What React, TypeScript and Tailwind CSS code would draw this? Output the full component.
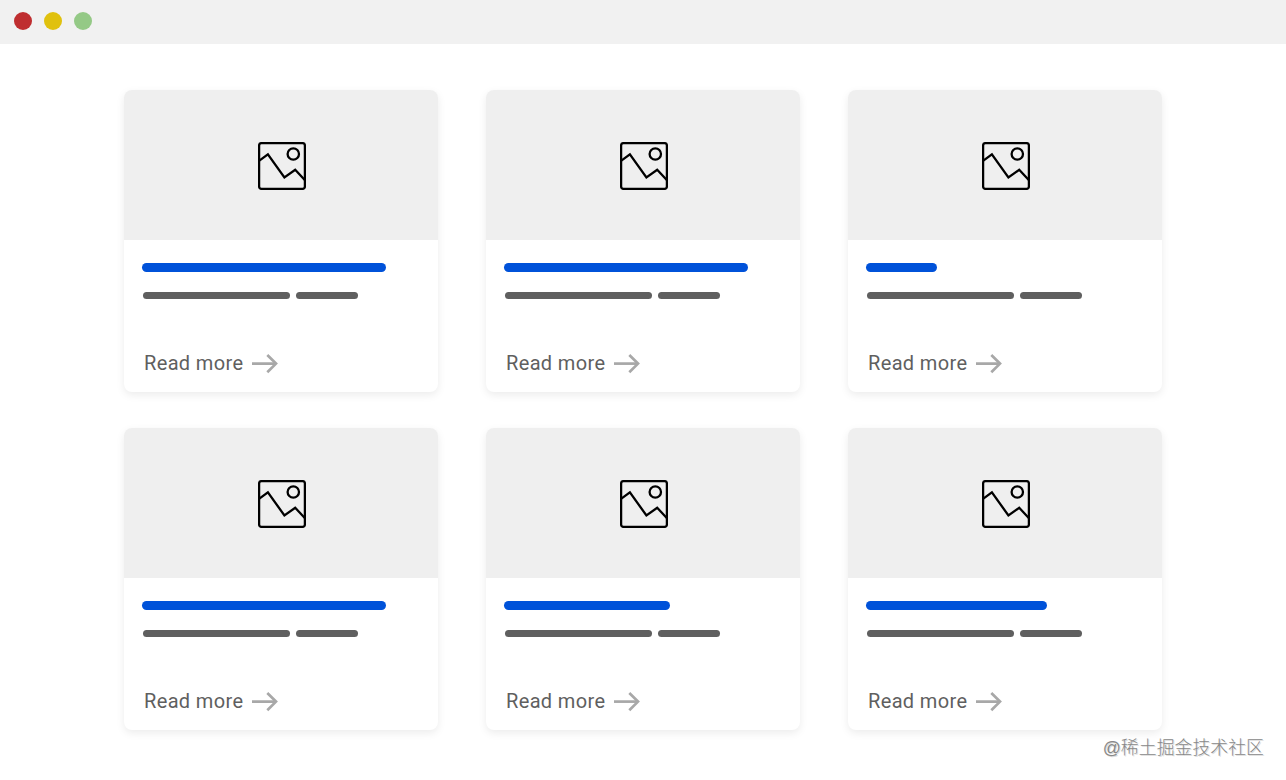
const cards = [
  { id: 1, titleWidth: "w-[244px]" },
  { id: 2, titleWidth: "w-[244px]" },
  { id: 3, titleWidth: "w-[71px]" },
  { id: 4, titleWidth: "w-[244px]" },
  { id: 5, titleWidth: "w-[166px]" },
  { id: 6, titleWidth: "w-[181px]" },
];

function ImageIcon() {
  return (
    <svg
      className="w-12 h-12 ml-0.5 mt-0.5"
      viewBox="0 0 48 48"
      fill="none"
      stroke="#000"
      strokeWidth="2.3"
    >
      <rect x="1.1" y="1.1" width="45.8" height="45.8" rx="2.4" />
      <path d="M1 18.9L9.9 12.4L26.4 35.4L37.2 27.8L47 38.2" />
      <circle cx="35.3" cy="12" r="5.7" />
    </svg>
  );
}

function ArrowIcon() {
  return (
    <svg
      className="w-[26px] h-5"
      viewBox="0 0 26 20"
      fill="none"
      stroke="#a8a8a8"
      strokeWidth="2.7"
    >
      <path d="M0 9.6H24" />
      <path d="M15.3 1L24 9.6L15.3 18.2" />
    </svg>
  );
}

function Card({ titleWidth }: { titleWidth: string }) {
  return (
    <article className="h-[302px] rounded-lg bg-white overflow-hidden shadow-[0_3px_8px_rgba(0,0,0,0.08)]">
      <div className="h-[150px] flex items-center justify-center bg-[#efefef]">
        <ImageIcon />
      </div>
      <div className="h-[152px] flex flex-col pl-[18px] pt-[23px]">
        <div className={`h-[8.5px] rounded-full bg-[#0052d9] ${titleWidth}`} />
        <div className="flex gap-1.5 mt-[20.5px] ml-px">
          <div className="w-[147px] h-[7px] rounded-full bg-[#5f5f5f]" />
          <div className="w-[62px] h-[7px] rounded-full bg-[#5f5f5f]" />
        </div>
        <a className="flex items-center h-6 mt-[52.5px] ml-0.5">
          <span className="w-[108px] pb-0.5 font-['Roboto',sans-serif] text-[20px] leading-6 tracking-[0.35px] whitespace-nowrap text-[#5f5f5f]">
            Read more
          </span>
          <ArrowIcon />
        </a>
      </div>
    </article>
  );
}

export default function App() {
  return (
    <div className="relative w-[1286px] h-[780px] overflow-hidden bg-white">
      <header className="h-11 flex gap-3 pl-3.5 pt-3 bg-[#f1f1f1]">
        <span className="w-[18px] h-[18px] rounded-full bg-[#bf2e30]" />
        <span className="w-[18px] h-[18px] rounded-full bg-[#e0c10e]" />
        <span className="w-[18px] h-[18px] rounded-full bg-[#94c986]" />
      </header>

      <main className="grid grid-cols-[314px_314px_314px] gap-x-12 gap-y-9 pl-[124px] pt-[46px]">
        {cards.map((card) => (
          <Card key={card.id} titleWidth={card.titleWidth} />
        ))}
      </main>

      <span className="absolute right-[22px] bottom-[20px] font-['Liberation_Sans','Noto_Sans_CJK_SC',sans-serif] font-light text-[17.9px] leading-6 whitespace-nowrap text-[#888] [text-shadow:1px_1px_0_#ddd]">
        @稀土掘金技术社区
      </span>
    </div>
  );
}
